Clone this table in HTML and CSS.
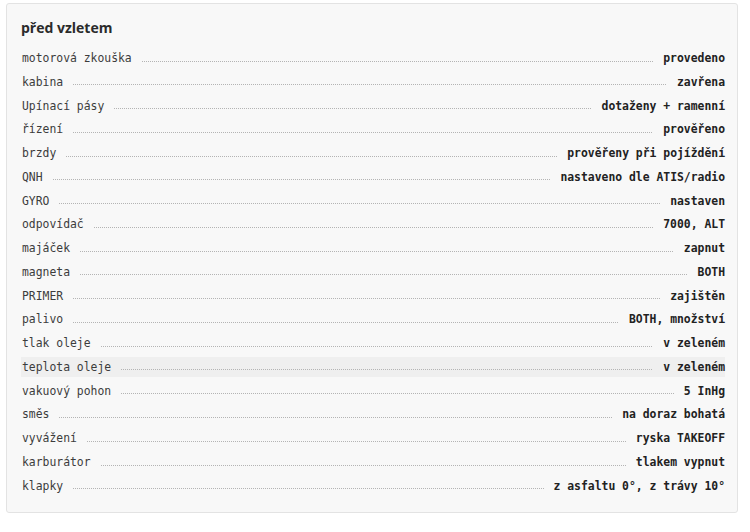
FILE: index.html
```html
<!DOCTYPE html>
<html lang="cs">
<head>
<meta charset="utf-8">
<link rel="stylesheet" href="styles.css">
</head>
<body>
<section class="card">
  <h2 class="title">před vzletem</h2>
  <ul class="list">
    <li class="row"><span class="label">motorová zkouška</span><span class="dots"></span><span class="value">provedeno</span></li>
    <li class="row"><span class="label">kabina</span><span class="dots"></span><span class="value">zavřena</span></li>
    <li class="row"><span class="label">Upínací pásy</span><span class="dots"></span><span class="value">dotaženy + ramenní</span></li>
    <li class="row"><span class="label">řízení</span><span class="dots"></span><span class="value">prověřeno</span></li>
    <li class="row"><span class="label">brzdy</span><span class="dots"></span><span class="value">prověřeny při pojíždění</span></li>
    <li class="row"><span class="label">QNH</span><span class="dots"></span><span class="value">nastaveno dle ATIS/radio</span></li>
    <li class="row"><span class="label">GYRO</span><span class="dots"></span><span class="value">nastaven</span></li>
    <li class="row"><span class="label">odpovídač</span><span class="dots"></span><span class="value">7000, ALT</span></li>
    <li class="row"><span class="label">majáček</span><span class="dots"></span><span class="value">zapnut</span></li>
    <li class="row"><span class="label">magneta</span><span class="dots"></span><span class="value">BOTH</span></li>
    <li class="row"><span class="label">PRIMER</span><span class="dots"></span><span class="value">zajištěn</span></li>
    <li class="row"><span class="label">palivo</span><span class="dots"></span><span class="value">BOTH, množství</span></li>
    <li class="row"><span class="label">tlak oleje</span><span class="dots"></span><span class="value">v zeleném</span></li>
    <li class="row is-hover"><span class="label">teplota oleje</span><span class="dots"></span><span class="value">v zeleném</span></li>
    <li class="row"><span class="label">vakuový pohon</span><span class="dots"></span><span class="value">5 InHg</span></li>
    <li class="row"><span class="label">směs</span><span class="dots"></span><span class="value">na doraz bohatá</span></li>
    <li class="row"><span class="label">vyvážení</span><span class="dots"></span><span class="value">ryska TAKEOFF</span></li>
    <li class="row"><span class="label">karburátor</span><span class="dots"></span><span class="value">tlakem vypnut</span></li>
    <li class="row"><span class="label">klapky</span><span class="dots"></span><span class="value">z asfaltu 0°, z trávy 10°</span></li>
  </ul>
</section>
</body>
</html>
```

FILE: styles.css
```css
html, body {
  margin: 0;
  padding: 0;
  background: #ffffff;
}

.card {
  box-sizing: border-box;
  width: 732px;
  margin: 3px 0 0 6px;
  padding: 14px 12px 16px 14px;
  background: #f8f8f8;
  border: 1px solid #e3e3e3;
  border-radius: 3px;
}

.title {
  margin: 0 0 10px 0;
  font-family: "Open Sans", "Noto Sans", sans-serif;
  font-weight: 700;
  font-size: 14px;
  line-height: 20px;
  color: #2b2b2b;
}

.list {
  list-style: none;
  margin: 0;
  padding: 0;
  display: flex;
  flex-direction: column;
  gap: 3.78px;
}

.row {
  display: flex;
  align-items: center;
  height: 20px;
  line-height: 20px;
  padding-left: 1px;
  font-family: "DejaVu Sans Mono", "Liberation Mono", monospace;
  font-size: 11.4px;
  color: #3c3c3c;
}

.row.is-hover {
  background: #efefef;
}

.label {
  white-space: nowrap;
}

.dots {
  flex: 1;
  margin: 0 10px;
  height: 1px;
  background: repeating-linear-gradient(to right, #b4b4b4 0 1px, transparent 1px 2px);
  transform: translateY(3px);
}

.value {
  white-space: nowrap;
  font-weight: 700;
  color: #222222;
}
```
